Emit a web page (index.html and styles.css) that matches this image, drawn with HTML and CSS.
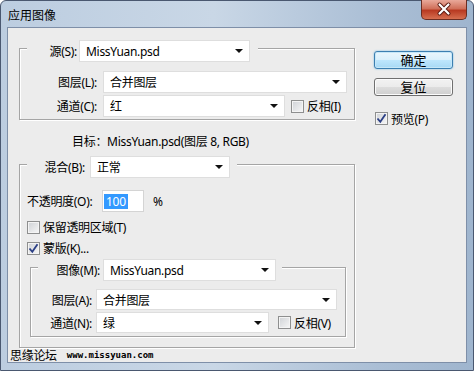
FILE: index.html
```html
<!DOCTYPE html>
<html lang="zh-CN">
<head>
  <meta charset="UTF-8">
  <title>应用图像</title>
  <link rel="stylesheet" href="styles.css">
</head>
<body>

  <div class="window">
    <div class="titlebar">
      <span class="title">应用图像</span>
      <div class="close">
        <svg width="46" height="20" viewBox="0 0 46 20">
          <path d="M18.5 5.5 L27.5 14.5 M27.5 5.5 L18.5 14.5" stroke="#5a1a10" stroke-width="4" stroke-linecap="round"/>
          <path d="M18.5 5.5 L27.5 14.5 M27.5 5.5 L18.5 14.5" stroke="#fff" stroke-width="2.2" stroke-linecap="round"/>
        </svg>
      </div>
    </div>

    <div class="client">
      <div class="main">
        <div class="left">

          <div class="group grp-src">
            <div class="legend">
              <span class="lbl" style="width:50px">源(S):</span>
              <div class="combo" style="width:171px"><span>MissYuan.psd</span><i class="arrow"></i></div>
            </div>
            <div class="row first">
              <span class="lbl lbl-src">图层(L):</span>
              <div class="combo" style="width:244px"><span>合并图层</span><i class="arrow"></i></div>
            </div>
            <div class="row">
              <span class="lbl lbl-src">通道(C):</span>
              <div class="combo" style="width:182px"><span>红</span><i class="arrow"></i></div>
              <label class="chk inv-src"><span class="box"></span>反相(I)</label>
            </div>
          </div>

          <div class="target">目标：MissYuan.psd(图层 8, RGB)</div>

          <div class="group grp-blend">
            <div class="legend">
              <span class="lbl" style="width:58px">混合(B):</span>
              <div class="combo combo-blend" style="width:140px"><span>正常</span><i class="arrow"></i></div>
            </div>
            <div class="row opacity">
              <span class="lbl-left">不透明度(O):</span>
              <div class="field"><span class="sel">100</span></div>
              <span class="pct">%</span>
            </div>
            <label class="chk chk-row1"><span class="box"></span>保留透明区域(T)</label>
            <label class="chk chk-row2"><span class="box"><svg width="11" height="11" viewBox="0 0 11 11"><path d="M1.5 5.5 L4.3 8.8 L9.5 1.2" fill="none" stroke="#2b3f85" stroke-width="1.8"/></svg></span>蒙版(K)...</label>

            <div class="group grp-mask">
              <div class="legend">
                <span class="lbl" style="width:62px">图像(M):</span>
                <div class="combo combo-mask" style="width:173px"><span>MissYuan.psd</span><i class="arrow"></i></div>
              </div>
              <div class="row row-sm first">
                <span class="lbl lbl-mask">图层(A):</span>
                <div class="combo" style="width:241px"><span>合并图层</span><i class="arrow"></i></div>
              </div>
              <div class="row row-sm">
                <span class="lbl lbl-mask">通道(N):</span>
                <div class="combo" style="width:173px"><span>绿</span><i class="arrow"></i></div>
                <label class="chk inv-mask"><span class="box"></span>反相(V)</label>
              </div>
            </div>
          </div>

        </div>

        <div class="right">
          <button class="btn btn-default">确定</button>
          <button class="btn">复位</button>
          <label class="chk preview"><span class="box"><svg width="11" height="11" viewBox="0 0 11 11"><path d="M1.5 5.5 L4.3 8.8 L9.5 1.2" fill="none" stroke="#2b3f85" stroke-width="1.8"/></svg></span>预览(P)</label>
        </div>
      </div>

      <div class="footer">思缘论坛 <span class="url">www.missyuan.com</span></div>
    </div>
  </div>

</body>
</html>
```

FILE: styles.css
```css
* { box-sizing: border-box; }
body { margin: 0; font-family: "Noto Sans", "Noto Sans CJK SC", sans-serif; font-size: 12px; letter-spacing: -0.3px; color: #000; }

.window { width: 474px; height: 371px; display: flex; flex-direction: column; padding: 0 6px 7px 6px; border: 1px solid #4a5870; border-radius: 6px 6px 0 0; background: linear-gradient(90deg, #bccde0, #c9d7e6 45%, #aabed5 80%, #9fb5ce); }
.titlebar { height: 26px; display: flex; align-items: flex-start; flex: none; }
.title { margin: 7px 0 0 1px; line-height: 16px; font-size: 12px; letter-spacing: 0; }
.close { margin: -1px 0 0 auto; width: 46px; height: 20px; border: 1px solid #6b2d22; border-top: none; border-radius: 0 0 5px 5px; background: linear-gradient(#e9a99a, #d0705a 45%, #b83a22 55%, #d66f50); }
.close svg { display: block; margin: -1px 0 0 -1px; }

.client { flex: 1; display: flex; flex-direction: column; border: 1px solid #7e8fa8; background: #ececec; }
.main { display: flex; padding: 20px 0 0 11px; }
.left { width: 336px; flex: none; }
.right { width: 79px; margin-left: 19px; padding-top: 3px; display: flex; flex-direction: column; }

/* group boxes: caption row sits on the top border */
.group { border: 1px solid #a5a5a5; box-shadow: inset 1px 1px 0 #fff, 1px 1px 0 #fff; }
.legend { display: flex; align-items: center; width: fit-content; margin-top: -9px; padding-right: 8px; background: #ececec; }

.grp-src { padding: 0 7px 2px 7px; }
.grp-src .first { margin-top: 9px; }
.grp-blend { margin-top: 14px; padding: 0 7px 10px 7px; }
.grp-blend > .legend { padding-right: 7px; }
.grp-mask { margin: 12px 1px 0 3px; padding: 0 7px 3px 7px; }
.grp-mask > .legend { padding-right: 6px; }
.grp-mask .first { margin-top: 8px; }

.row { display: flex; align-items: center; height: 22px; }
.row + .row { margin-top: 2px; }
.row-sm { height: 21px; }
.lbl { flex: none; text-align: right; white-space: nowrap; margin-right: 2px; }
.lbl-src { width: 70px; margin-right: 6px; }
.lbl-mask { width: 54px; margin-right: 4px; }
.combo-blend { margin-left: 3px; }
.combo-mask { margin-left: 1px; }

.combo { height: 22px; flex: none; display: flex; align-items: center; padding: 0 6px; background: #fff; border: 1px solid #dedede; white-space: nowrap; }
.row-sm .combo { height: 21px; }
.arrow { margin-left: auto; width: 0; height: 0; border-left: 4px solid transparent; border-right: 4px solid transparent; border-top: 4px solid #111; }

.chk { display: flex; align-items: center; height: 14px; white-space: nowrap; }
.box { width: 13px; height: 13px; flex: none; margin-right: 3px; border: 1px solid #8e8f8f; background: linear-gradient(135deg, #cfd2d6, #f7f7f7); box-shadow: inset 0 0 0 1px #f4f4f4; }
.box svg { display: block; }
.inv-src { margin-left: 6px; }
.inv-mask { margin-left: 9px; }

.target { margin-top: 14px; height: 16px; line-height: 16px; padding-left: 53px; }

.opacity { margin-top: 12px; }
.lbl-left { width: 75px; flex: none; white-space: nowrap; }
.field { width: 42px; height: 22px; background: #fff; border: 1px solid #d4d4d4; display: flex; align-items: center; padding-left: 1px; }
.sel { background: #3399ff; color: #fff; padding: 0 2px; line-height: 15px; }
.pct { margin-left: 9px; }
.chk-row1 { margin-top: 8px; }
.chk-row2 { margin-top: 7px; }

.btn { width: 79px; height: 18px; padding: 0; font: inherit; font-size: 13px; line-height: 14px; border: 1px solid #707070; border-radius: 3px; background: linear-gradient(#f2f2f2, #ebebeb 50%, #dddddd 51%, #cfcfcf); box-shadow: inset 0 0 0 1px #fcfcfc; color: #000; }
.btn + .btn { margin-top: 9px; }
.btn-default { border-color: #3c7fb1; background: linear-gradient(#eaf6fd, #d9f0fc 50%, #bee6fd 51%, #a7d9f5); box-shadow: inset 0 0 0 1px #c6e7f8, 0 0 2px #6fb7e3; }
.preview { margin: 16px 0 0 1px; height: 13px; }

.footer { margin-top: auto; height: 13px; line-height: 13px; padding-left: 2px; font-size: 12px; display: flex; align-items: center; }
.url { margin-left: 10px; font-family: "DejaVu Sans Mono", monospace; font-size: 9px; font-weight: bold; letter-spacing: 0; }
```
